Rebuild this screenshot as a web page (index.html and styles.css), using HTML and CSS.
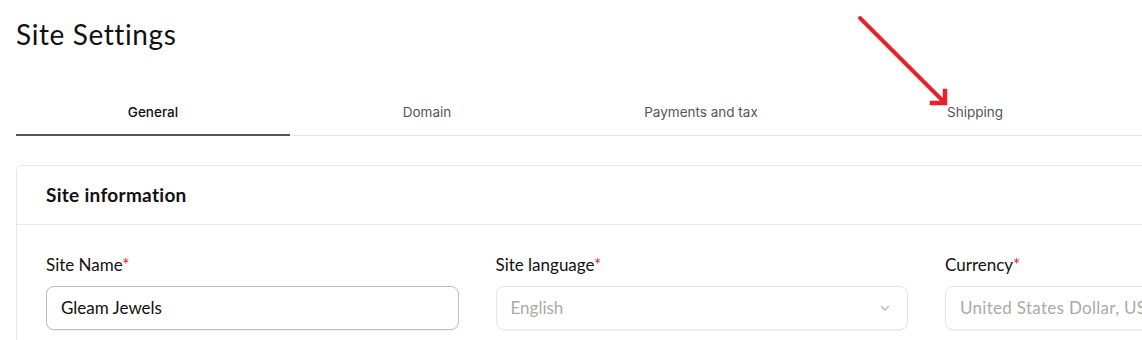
FILE: index.html
```html
<!DOCTYPE html>
<html lang="en">
<head>
    <meta charset="UTF-8">
    <meta name="viewport" content="width=device-width, initial-scale=1.0">
    <title>Site Settings</title>
    <link rel="stylesheet" href="styles.css">
</head>
<body>
    <div class="page">
        <h1 class="title">Site Settings</h1>

        <div class="tabs">
            <div class="tab active">General</div>
            <div class="tab">Domain</div>
            <div class="tab">Payments and tax</div>
            <div class="tab">Shipping</div>
        </div>

        <div class="card">
            <div class="card-header">Site information</div>
            <div class="card-body">
                <div class="field">
                    <label>Site Name<span class="req">*</span></label>
                    <div class="input">Gleam Jewels</div>
                </div>
                <div class="field">
                    <label>Site language<span class="req">*</span></label>
                    <div class="input disabled">
                        English
                        <svg class="chevron" width="12" height="12" viewBox="0 0 12 12"><path d="M2.5 4.5 L6 8 L9.5 4.5" fill="none" stroke="#b5b5b5" stroke-width="1.3" stroke-linecap="round" stroke-linejoin="round"/></svg>
                    </div>
                </div>
                <div class="field">
                    <label>Currency<span class="req">*</span></label>
                    <div class="input disabled"><span class="clip">United States Dollar, USD</span></div>
                </div>
            </div>
        </div>
    </div>

    <svg class="arrow" width="120" height="120" viewBox="0 0 120 120">
        <line x1="20" y1="18" x2="103" y2="101" stroke="#e8212b" stroke-width="4" stroke-linecap="round"/>
        <path d="M92 103 L105 103 L105 91" fill="none" stroke="#e8212b" stroke-width="4.5" stroke-linecap="square"/>
    </svg>
</body>
</html>
```

FILE: styles.css
```css
body { margin: 0; font-family: "Lato", "Inter", sans-serif; color: #111; background: #fff; overflow: hidden; }
.page { width: 1400px; padding: 0 16px; }
.title { margin: 0; padding-top: 14px; height: 41px; font-size: 28px; font-weight: 400; line-height: 40px; letter-spacing: 0.6px; }

.tabs { display: flex; margin-top: 34px; border-bottom: 1px solid #e6e6e6; }
.tab { width: 274px; flex-shrink: 0; text-align: center; font-family: "Inter", sans-serif; font-size: 13.5px; color: #555; height: 46px; line-height: 46px; }
.tab.active { color: #111; font-weight: 500; border-bottom: 2px solid #555; margin-bottom: -1px; height: 45px; }

.card { margin-top: 29px; border: 1px solid #e8e8e8; border-radius: 6px; }
.card-header { padding: 0 29px; height: 58px; line-height: 58px; font-size: 19px; font-weight: 700; letter-spacing: 0.3px; border-bottom: 1px solid #e8e8e8; }
.card-body { display: flex; gap: 37px; padding: 30px 29px 20px; }
.field { width: 412.5px; flex-shrink: 0; }
.field label { display: block; font-size: 17px; margin-bottom: 11px; height: 20px; line-height: 20px; }
.req { color: #e0242b; }
.input { height: 42px; border: 1px solid #bdbdbd; border-radius: 8px; padding: 0 14px; line-height: 42px; font-size: 17px; display: flex; justify-content: space-between; align-items: center; box-shadow: 0 1px 1px rgba(0,0,0,0.06); }
.input.disabled { border-color: #e6e6e6; color: #aaa; }
.clip { white-space: nowrap; letter-spacing: 0.3px; }
.chevron { margin-right: 2px; }

.arrow { position: absolute; left: 840px; top: 0; }
```
